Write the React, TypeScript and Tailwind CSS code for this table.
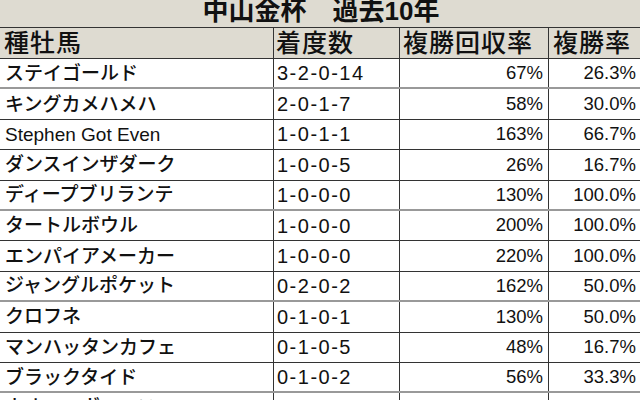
const rows = [
  { name: "ステイゴールド", rec: "3-2-0-14", ret: "67%", rate: "26.3%", gray: true },
  { name: "キングカメハメハ", rec: "2-0-1-7", ret: "58%", rate: "30.0%" },
  { name: "Stephen Got Even", rec: "1-0-1-1", ret: "163%", rate: "66.7%" },
  { name: "ダンスインザダーク", rec: "1-0-0-5", ret: "26%", rate: "16.7%" },
  { name: "ディープブリランテ", rec: "1-0-0-0", ret: "130%", rate: "100.0%", gray: true },
  { name: "タートルボウル", rec: "1-0-0-0", ret: "200%", rate: "100.0%" },
  { name: "エンパイアメーカー", rec: "1-0-0-0", ret: "220%", rate: "100.0%" },
  { name: "ジャングルポケット", rec: "0-2-0-2", ret: "162%", rate: "50.0%", gray: true },
  { name: "クロフネ", rec: "0-1-0-1", ret: "130%", rate: "50.0%" },
  { name: "マンハッタンカフェ", rec: "0-1-0-5", ret: "48%", rate: "16.7%" },
  { name: "ブラックタイド", rec: "0-1-0-2", ret: "56%", rate: "33.3%", gray: true },
  { name: "ネオユニヴァース", rec: "0-1-0-3", ret: "40%", rate: "25.0%" },
]

const font = { fontFamily: '"Liberation Sans", "Noto Sans CJK JP", sans-serif' }

export default function App() {
  return (
    <div className="w-[640px] h-[400px] overflow-hidden bg-white text-[#111]" style={font}>
      <div className="h-[27px] bg-[#dedbd1] flex items-end justify-center pl-[2px] pb-[3px] overflow-hidden">
        <span className="text-[26px] leading-[26px] font-bold whitespace-nowrap">中山金杯　過去10年</span>
      </div>
      <div className="h-[30px] bg-[#dedbd1] border-t border-b border-[#333] flex text-[25px] font-medium leading-none box-content">
        <div className="w-[273px] flex items-center pl-[4px] tracking-[1px]">種牡馬</div>
        <div className="w-[126px] border-l border-[#333] flex items-center pl-[2px] tracking-[1px]">着度数</div>
        <div className="w-[149px] border-l border-[#333] flex items-center pl-[3px] tracking-[1px]">複勝回収率</div>
        <div className="flex-1 border-l border-[#333] flex items-center pl-[4px] tracking-[1px]">複勝率</div>
      </div>
      {rows.map((r) => (
        <div
          key={r.name}
          className={`h-[30.4px] flex text-[19px] font-medium leading-none border-b ${r.gray ? "border-[#999] border-b-2" : "border-[#333]"}`}
        >
          <div className="w-[273px] flex items-center pl-[5px] whitespace-nowrap">{r.name}</div>
          <div className="w-[126px] border-l border-[#333] flex items-center pl-[3px] text-[20px] tracking-[1.5px]">{r.rec}</div>
          <div className="w-[149px] border-l border-[#333] flex items-center justify-end pr-[5px] text-[18.5px]">{r.ret}</div>
          <div className="flex-1 border-l border-[#333] flex items-center justify-end pr-[4px] text-[18.5px]">{r.rate}</div>
        </div>
      ))}
    </div>
  )
}
